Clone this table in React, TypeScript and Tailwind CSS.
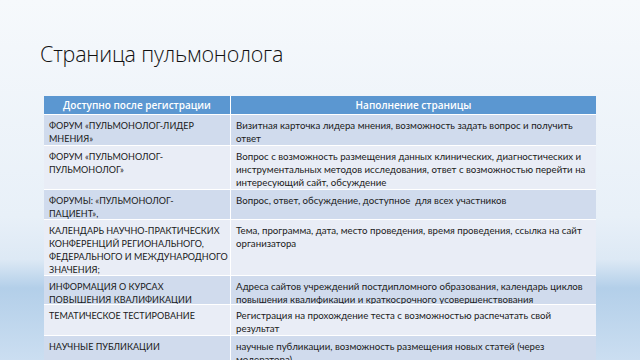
export default function App() {
  const rows = [
    {
      left: ['ФОРУМ «ПУЛЬМОНОЛОГ-ЛИДЕР', 'МНЕНИЯ»'],
      right: ['Визитная карточка лидера мнения, возможность задать вопрос и получить', 'ответ'],
      h: 'h-[31px]',
    },
    {
      left: ['ФОРУМ «ПУЛЬМОНОЛОГ-', 'ПУЛЬМОНОЛОГ»'],
      right: [
        'Вопрос с возможность размещения данных клинических, диагностических и',
        'инструментальных методов исследования, ответ с возможностью перейти на',
        'интересующий сайт, обсуждение',
      ],
      h: 'h-[44px]',
    },
    {
      left: ['ФОРУМЫ: «ПУЛЬМОНОЛОГ-', 'ПАЦИЕНТ»,'],
      right: ['Вопрос, ответ, обсуждение, доступное  для всех участников'],
      h: 'h-[30px]',
    },
    {
      left: ['КАЛЕНДАРЬ НАУЧНО-ПРАКТИЧЕСКИХ', 'КОНФЕРЕНЦИЙ РЕГИОНАЛЬНОГО,', 'ФЕДЕРАЛЬНОГО И МЕЖДУНАРОДНОГО', 'ЗНАЧЕНИЯ;'],
      right: ['Тема, программа, дата, место проведения, время проведения, ссылка на сайт', 'организатора'],
      h: 'h-[56px]',
    },
    {
      left: ['ИНФОРМАЦИЯ О КУРСАХ', 'ПОВЫШЕНИЯ КВАЛИФИКАЦИИ'],
      right: [
        'Адреса сайтов учреждений постдипломного образования, календарь циклов',
        'повышения квалификации и краткосрочного усовершенствования',
      ],
      h: 'h-[29px]',
    },
    {
      left: ['ТЕМАТИЧЕСКОЕ ТЕСТИРОВАНИЕ'],
      right: ['Регистрация на прохождение теста с возможностью распечатать свой', 'результат'],
      h: 'h-[31px]',
    },
    {
      left: ['НАУЧНЫЕ ПУБЛИКАЦИИ'],
      right: ['научные публикации, возможность размещения новых статей (через', 'модератора)'],
      h: 'h-[34px]',
    },
  ]

  return (
    <div className="w-[640px] h-[360px] overflow-hidden bg-[linear-gradient(180deg,#f6f9fc_0%,#e8f0f8_60%,#dde9f5_72%,#b3cfe9_80%,#cbdef1_100%)] font-['Open_Sans',sans-serif]">
      <h1 className="pl-[40px] pt-[39px] h-[96px] text-[21.5px] font-light leading-[30px] text-[#111] tracking-[-0.2px]">
        Страница пульмонолога
      </h1>
      <div className="ml-[44px] w-[552px]">
        <div className="grid grid-cols-[187px_365px] h-[18px] bg-[#5b97d1] text-white text-[10px] font-semibold leading-[18px]">
          <div className="text-center border-r border-white">Доступно после регистрации</div>
          <div className="text-center">Наполнение страницы</div>
        </div>
        {rows.map((r, i) => (
          <div
            key={i}
            className={`grid grid-cols-[187px_365px] ${r.h} border-t border-white font-['Lato',sans-serif] leading-[13px] text-[#1a1a1a] ${
              i % 2 === 0 ? 'bg-[#d0dbed]' : 'bg-[#e9edf6]'
            }`}
          >
            <div className="px-[5px] pt-[4px] border-r border-white overflow-hidden whitespace-pre text-[9px]">
              {r.left.map((l, j) => (
                <div key={j}>{l}</div>
              ))}
            </div>
            <div className="pl-[5px] pt-[4px] overflow-hidden whitespace-pre text-[9.7px]">
              {r.right.map((l, j) => (
                <div key={j}>{l}</div>
              ))}
            </div>
          </div>
        ))}
      </div>
    </div>
  )
}
